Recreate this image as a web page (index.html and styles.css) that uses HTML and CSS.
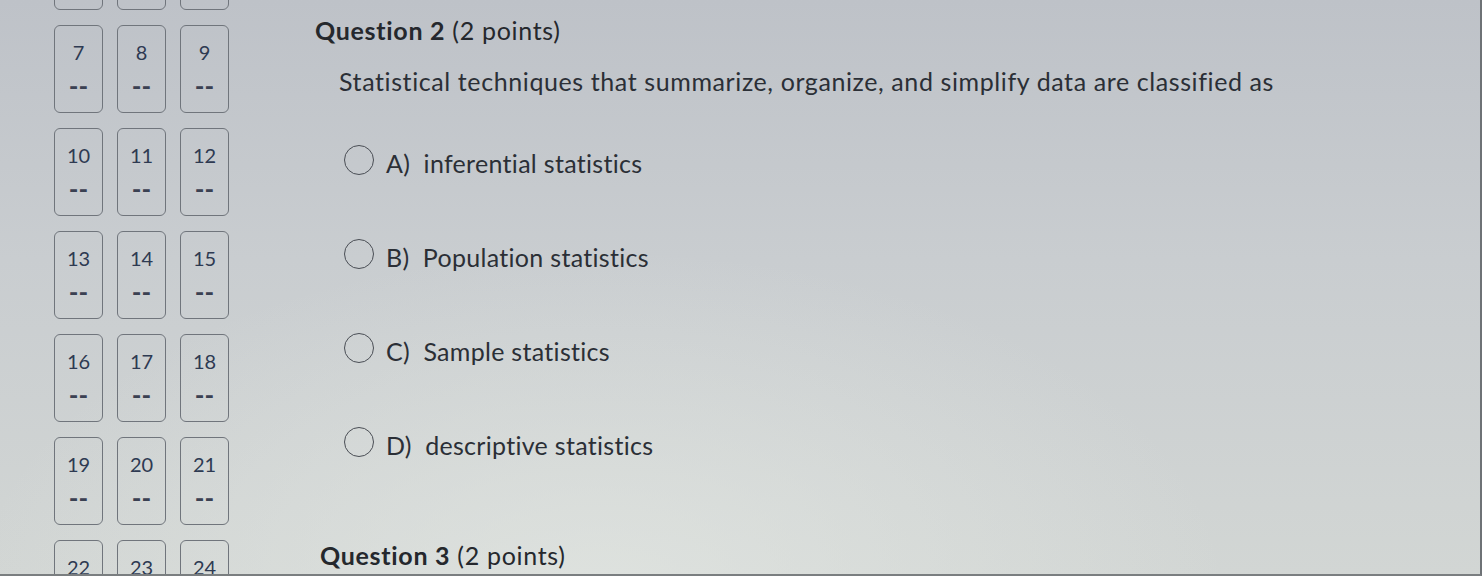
FILE: index.html
```html
<!DOCTYPE html>
<html lang="en">
<head>
<meta charset="utf-8">
<title>Quiz</title>
<link rel="stylesheet" href="styles.css">
</head>
<body>
<div class="screen">
  <nav class="qnav">
    <div class="tile"><span class="num">4</span><span class="dash">--</span></div>
    <div class="tile"><span class="num">5</span><span class="dash">--</span></div>
    <div class="tile"><span class="num">6</span><span class="dash">--</span></div>
    <div class="tile"><span class="num">7</span><span class="dash">--</span></div>
    <div class="tile"><span class="num">8</span><span class="dash">--</span></div>
    <div class="tile"><span class="num">9</span><span class="dash">--</span></div>
    <div class="tile"><span class="num">10</span><span class="dash">--</span></div>
    <div class="tile"><span class="num">11</span><span class="dash">--</span></div>
    <div class="tile"><span class="num">12</span><span class="dash">--</span></div>
    <div class="tile"><span class="num">13</span><span class="dash">--</span></div>
    <div class="tile"><span class="num">14</span><span class="dash">--</span></div>
    <div class="tile"><span class="num">15</span><span class="dash">--</span></div>
    <div class="tile"><span class="num">16</span><span class="dash">--</span></div>
    <div class="tile"><span class="num">17</span><span class="dash">--</span></div>
    <div class="tile"><span class="num">18</span><span class="dash">--</span></div>
    <div class="tile"><span class="num">19</span><span class="dash">--</span></div>
    <div class="tile"><span class="num">20</span><span class="dash">--</span></div>
    <div class="tile"><span class="num">21</span><span class="dash">--</span></div>
    <div class="tile"><span class="num">22</span><span class="dash">--</span></div>
    <div class="tile"><span class="num">23</span><span class="dash">--</span></div>
    <div class="tile"><span class="num">24</span><span class="dash">--</span></div>
  </nav>
  <main class="content">
    <section class="question">
      <h2 class="qtitle"><b>Question 2</b> (2 points)</h2>
      <p class="qtext">Statistical techniques that summarize, organize, and simplify data are classified as</p>
      <ul class="options">
        <li class="option"><span class="radio"></span><span class="label">A)&nbsp; inferential statistics</span></li>
        <li class="option"><span class="radio"></span><span class="label">B)&nbsp; Population statistics</span></li>
        <li class="option"><span class="radio"></span><span class="label">C)&nbsp; Sample statistics</span></li>
        <li class="option"><span class="radio"></span><span class="label">D)&nbsp; descriptive statistics</span></li>
      </ul>
    </section>
    <section class="question next">
      <h2 class="qtitle"><b>Question 3</b> (2 points)</h2>
    </section>
  </main>
</div>
</body>
</html>
```
FILE: styles.css
```css
html, body {
  margin: 0;
  padding: 0;
  height: 100%;
  overflow: hidden;
}
body {
  font-family: Lato, "Open Sans", sans-serif;
  color: #2b2f36;
  background:
    radial-gradient(ellipse 900px 500px at 600px 600px, rgba(226,230,226,0.75), rgba(226,230,226,0) 70%),
    linear-gradient(180deg, #bec2c8 0%, #c9cdd0 45%, #d2d6d4 100%);
}
.screen {
  display: flex;
  height: 574px;
  width: 1480px;
  border-right: 2px solid #6e7276;
  border-bottom: 2px solid #7a7e80;
  overflow: hidden;
  box-sizing: content-box;
}
.qnav {
  display: grid;
  grid-template-columns: repeat(3, 49px);
  grid-auto-rows: 88px;
  column-gap: 14px;
  row-gap: 15px;
  margin-top: -78px;
  margin-left: 54px;
  align-content: start;
}
.tile {
  border: 1px solid #70757c;
  border-radius: 6px;
  display: flex;
  flex-direction: column;
  align-items: center;
  padding-top: 13px;
  box-sizing: border-box;
}
.num {
  font-size: 20px;
  line-height: 26px;
  color: #2e3a52;
}
.dash {
  margin-top: 10px;
  font-size: 26px;
  font-weight: 700;
  line-height: 22px;
  letter-spacing: 0;
  color: #3a4152;
}
.content {
  margin-left: 86px;
  display: flex;
  flex-direction: column;
}
.qtitle {
  margin: 15px 0 0;
  font-size: 25px;
  line-height: 30px;
  font-weight: 400;
  letter-spacing: 0.7px;
  color: #25282d;
}
.qtitle b {
  font-weight: 700;
}
.qtext {
  margin: 21px 0 0 24px;
  font-size: 25px;
  line-height: 30px;
  letter-spacing: 0.6px;
  color: #2b2f36;
}
.options {
  list-style: none;
  margin: 52px 0 0 29px;
  padding: 0;
  display: flex;
  flex-direction: column;
  gap: 64px;
}
.option {
  display: flex;
  align-items: center;
  gap: 12px;
  height: 30px;
}
.radio {
  width: 30px;
  height: 30px;
  margin-top: -6px;
  border: 1.5px solid #4a4e55;
  border-radius: 50%;
  box-sizing: border-box;
}
.label {
  font-size: 25px;
  line-height: 30px;
  letter-spacing: 0.3px;
  color: #2b2f36;
}
.next {
  margin-top: 80px;
  margin-left: 5px;
}
.next .qtitle {
  margin-top: 0;
}
```
